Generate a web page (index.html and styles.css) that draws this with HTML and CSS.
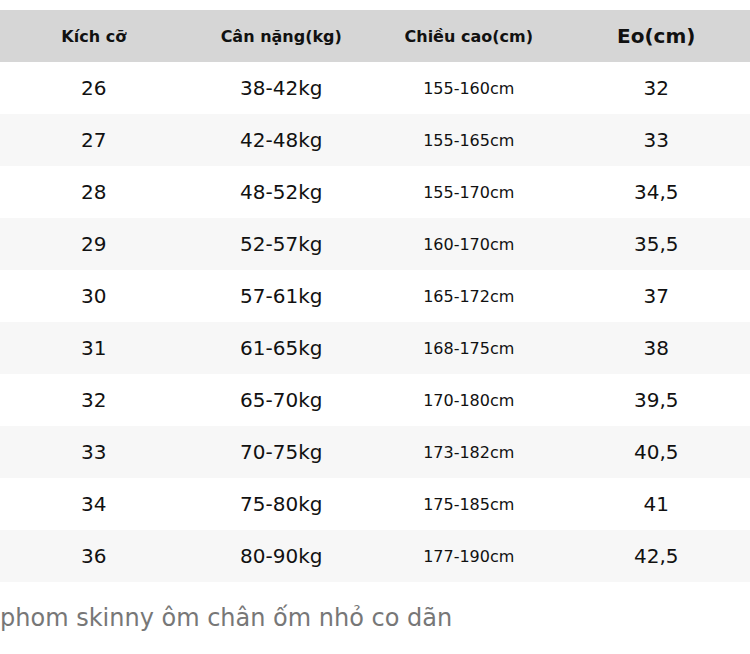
FILE: index.html
```html
<!DOCTYPE html>
<html lang="vi">
<head>
<meta charset="utf-8">
<link rel="stylesheet" href="styles.css">
</head>
<body>
<table class="size-table">
  <thead>
    <tr>
      <th>Kích cỡ</th>
      <th>Cân nặng(kg)</th>
      <th>Chiều cao(cm)</th>
      <th class="big">Eo(cm)</th>
    </tr>
  </thead>
  <tbody>
    <tr><td>26</td><td>38-42kg</td><td class="sm">155-160cm</td><td>32</td></tr>
    <tr><td>27</td><td>42-48kg</td><td class="sm">155-165cm</td><td>33</td></tr>
    <tr><td>28</td><td>48-52kg</td><td class="sm">155-170cm</td><td>34,5</td></tr>
    <tr><td>29</td><td>52-57kg</td><td class="sm">160-170cm</td><td>35,5</td></tr>
    <tr><td>30</td><td>57-61kg</td><td class="sm">165-172cm</td><td>37</td></tr>
    <tr><td>31</td><td>61-65kg</td><td class="sm">168-175cm</td><td>38</td></tr>
    <tr><td>32</td><td>65-70kg</td><td class="sm">170-180cm</td><td>39,5</td></tr>
    <tr><td>33</td><td>70-75kg</td><td class="sm">173-182cm</td><td>40,5</td></tr>
    <tr><td>34</td><td>75-80kg</td><td class="sm">175-185cm</td><td>41</td></tr>
    <tr><td>36</td><td>80-90kg</td><td class="sm">177-190cm</td><td>42,5</td></tr>
  </tbody>
</table>
<p class="caption">phom skinny ôm chân ốm nhỏ co dãn</p>
</body>
</html>
```
FILE: styles.css
```css
html, body {
  margin: 0;
  padding: 0;
  background: #fff;
}
body {
  font-family: "DejaVu Sans", sans-serif;
  color: #111;
}
.size-table {
  margin-top: 10px;
  width: 750px;
  border-collapse: collapse;
  table-layout: fixed;
}
.size-table th,
.size-table td {
  padding: 0;
  text-align: center;
  vertical-align: middle;
  height: 52px;
}
.size-table thead tr {
  background: #d6d6d6;
}
.size-table th {
  font-size: 16px;
  font-weight: bold;
  color: #111;
}
.size-table th.big {
  font-size: 20px;
}
.size-table td {
  font-size: 20px;
}
.size-table td.sm {
  font-size: 16px;
}
.size-table tbody tr:nth-child(even) {
  background: #f7f7f7;
}
.caption {
  margin: 0;
  padding-top: 22px;
  font-size: 24px;
  color: #777;
}
```
